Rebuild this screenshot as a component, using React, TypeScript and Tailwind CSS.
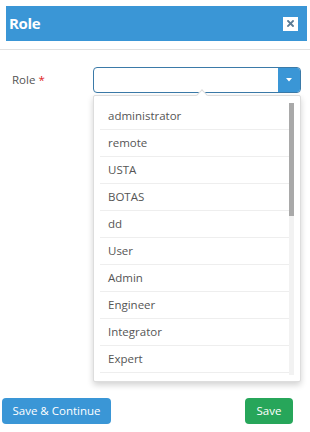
import React from "react";

const items = ["administrator", "remote", "USTA", "BOTAS", "dd", "User", "Admin", "Engineer", "Integrator", "Expert"];

export default function App() {
  return (
    <div className="w-[310px] h-[432px] bg-white relative overflow-hidden" style={{ fontFamily: '"Open Sans", "Noto Sans", sans-serif' }}>
      <div className="pt-[6px] px-[3px] pl-[6px]">
        <div className="h-[35px] bg-[#3a96d6] flex items-center justify-between pl-[3px] pr-[9px]">
          <span className="text-white font-bold text-[15px] tracking-[-0.3px]">Role</span>
          <div className="w-[15px] h-[14px] bg-white flex items-center justify-center">
            <svg width="7" height="7" viewBox="0 0 7 7">
              <path d="M1 1 L6 6 M6 1 L1 6" stroke="#5a7a94" strokeWidth="1.8" strokeLinecap="square" />
            </svg>
          </div>
        </div>
      </div>
      <div className="mt-[8px] h-px bg-[#e2e2e2]" />
      <div className="flex items-center mt-[17px] h-[26px]">
        <div className="w-[93px] pl-[12px] text-[11.5px] text-[#555]">
          Role <span className="text-[#e02222]">*</span>
        </div>
        <div className="w-[208px] h-[26px] border border-[#3b7aa8] rounded-[4px] flex justify-end overflow-hidden">
          <div className="w-[22px] h-full bg-[#3a96d6] flex items-center justify-center">
            <svg width="6" height="4" viewBox="0 0 6 4"><path d="M0 0 L6 0 L3 3.5 Z" fill="white" /></svg>
          </div>
        </div>
      </div>
      <div className="ml-[93px] mt-[2px] w-[208px] h-[287px] bg-white border border-[#ddd] rounded-[2px] shadow-[0_3px_6px_rgba(0,0,0,0.18)] relative pt-[7px] pl-[6px] pr-[6px]">
        <div className="absolute -top-[5px] left-[104px] w-[8px] h-[8px] bg-white border-l border-t border-[#ddd] rotate-45" />
        <div className="flex h-[272px] overflow-hidden">
          <div className="flex-1">
            {items.map((it) => (
              <div key={it} className="h-[27px] border-b border-[#eee] flex items-center pl-[8px] text-[11.5px] text-[#555]">
                {it}
              </div>
            ))}
          </div>
          <div className="w-[5px] h-full bg-[#f2f2f2] flex flex-col">
            <div className="h-[113px] bg-[#a9a9a9]" />
          </div>
        </div>
      </div>
      <div className="flex justify-between mt-[16px] pl-[2px] pr-[17px]">
        <button className="w-[109px] h-[26px] rounded-[4px] bg-[#3a96d6] text-white text-[11.5px]">Save &amp; Continue</button>
        <button className="w-[48px] h-[26px] rounded-[4px] bg-[#27a65a] text-white text-[11.5px]">Save</button>
      </div>
    </div>
  );
}
